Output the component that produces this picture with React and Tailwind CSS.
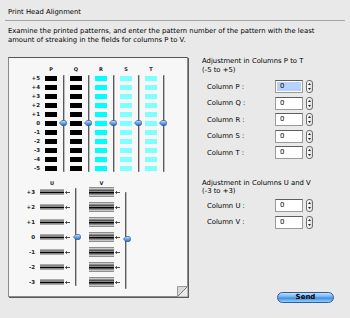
import React from "react";

const topRows = ["+5", "+4", "+3", "+2", "+1", "0", "-1", "-2", "-3", "-4", "-5"];
const topCols = [
  { name: "P", color: "bg-black" },
  { name: "Q", color: "bg-black" },
  { name: "R", color: "bg-[#00ffff]" },
  { name: "S", color: "bg-[#80ffff]" },
  { name: "T", color: "bg-[#80ffff]" },
];
const bottomRows = ["+3", "+2", "+1", "0", "-1", "-2", "-3"];

const Thumb = () => (
  <svg width="8" height="6" viewBox="0 0 8 6">
    <defs>
      <linearGradient id="thumbFill" x1="0" y1="0" x2="0" y2="1">
        <stop offset="0" stopColor="#d6eaff" />
        <stop offset="0.5" stopColor="#6aa6ea" />
        <stop offset="1" stopColor="#2f6fc4" />
      </linearGradient>
    </defs>
    <path d="M0.5 3 L2.8 0.5 H6 Q7.5 0.5 7.5 3 Q7.5 5.5 6 5.5 H2.8 Z" fill="url(#thumbFill)" stroke="#2a5a9a" strokeWidth="0.7" />
  </svg>
);

const Track = ({ top, height, thumbTop }) => (
  <div className="relative h-full">
    <div
      className="absolute left-1/2 -translate-x-1/2 w-[2px] bg-[#5a5a5a] border-r border-[#bdbdbd] rounded-full"
      style={{ top, height }}
    />
    <div className="absolute left-[2px]" style={{ top: thumbTop }}>
      <Thumb />
    </div>
  </div>
);

const Arrow = () => (
  <svg width="5" height="5" viewBox="0 0 5 5" className="ml-[1px]">
    <path d="M0.5 2.5 H5" stroke="#222" strokeWidth="0.8" />
    <path d="M0.5 2.5 L2 1.2 M0.5 2.5 L2 3.8" stroke="#222" strokeWidth="0.8" />
  </svg>
);

const TopChart = () => (
  <div className="flex text-[5.5px] font-bold leading-[9px] text-[#222]">
    <div className="flex flex-col w-[26px] pr-[2px] text-right">
      <div className="h-[9px]" />
      {topRows.map((r) => (
        <div key={r} className="h-[9px]">{r}</div>
      ))}
    </div>
    <div className="w-[3px]" />
    {topCols.map((c) => (
      <div key={c.name} className="flex">
        <div className="flex flex-col w-[12px]">
          <div className="h-[9px] text-center text-[5px]">{c.name}</div>
          {topRows.map((r) => (
            <div key={r} className="h-[9px] flex items-center">
              <div className={`w-[12px] h-[5px] ${c.color}`} />
            </div>
          ))}
        </div>
        <div className="flex flex-col w-[13px]">
          <div className="h-[9px]" />
          <div className="h-[99px]">
            <Track top={1.5} height={97} thumbTop={46.5} />
          </div>
        </div>
      </div>
    ))}
  </div>
);

const UBar = () => (
  <div className="w-[24px] h-[6px] bg-[#8a8a8a] border-y border-[#aaa] flex flex-col justify-center">
    <div className="h-px bg-black" />
  </div>
);

const VBar = () => (
  <div className="w-[25px] h-[10px] bg-[#8d8d8d] flex flex-col justify-between py-[1px]">
    <div className="h-px bg-[#c8c8c8]" />
    <div className="h-px bg-[#555]" />
    <div className="h-px bg-black" />
    <div className="h-px bg-[#555]" />
    <div className="h-px bg-[#c8c8c8]" />
  </div>
);

const BottomChart = () => (
  <div className="flex text-[5.5px] font-bold text-[#222]">
    <div className="flex flex-col w-[21px] pr-[2px] text-right">
      <div className="h-[6px]" />
      {bottomRows.map((r) => (
        <div key={r} className="h-[15px] leading-[15px]">{r}</div>
      ))}
    </div>
    <div className="w-[3px]" />
    <div className="flex flex-col w-[31px]">
      <div className="h-[6px] leading-[6px] w-[24px] text-center text-[5px] relative top-[1.5px]">U</div>
      {bottomRows.map((r) => (
        <div key={r} className="h-[15px] flex items-center">
          <UBar />
          <Arrow />
        </div>
      ))}
    </div>
    <div className="flex flex-col w-[10px]">
      <div className="h-[6px]" />
      <div className="h-[105px]">
        <Track top={3.5} height={98} thumbTop={49.5} />
      </div>
    </div>
    <div className="w-[8px]" />
    <div className="flex flex-col w-[32px]">
      <div className="h-[6px] leading-[6px] w-[25px] text-center text-[5px] relative top-[1.5px]">V</div>
      {bottomRows.map((r) => (
        <div key={r} className="h-[15px] flex items-center">
          <VBar />
          <Arrow />
        </div>
      ))}
    </div>
    <div className="flex flex-col w-[10px]">
      <div className="h-[6px]" />
      <div className="h-[105px]">
        <Track top={7.5} height={97} thumbTop={51.5} />
      </div>
    </div>
  </div>
);

const Paper = () => (
  <div className="relative w-[180px] h-[240px] bg-[#f7f7f7] border border-[#8a8a8a] border-t-[#555] shadow-[1px_1px_0_#5c5c5c] pl-[7px] pt-[6.5px] flex flex-col shrink-0">
    <TopChart />
    <div className="h-[6px]" />
    <BottomChart />
    <svg width="11" height="11" viewBox="0 0 11 11" className="absolute right-[-1px] bottom-[-1px]">
      <path d="M0.5 10.5 L0.5 0.5 L10.5 0.5 Z" fill="#d9d9d9" />
      <path d="M0.5 10.5 L10.5 0.5 L10.5 10.5 Z" fill="#e9e9e9" />
      <path d="M0.5 0.5 L10.5 0.5 M0.5 0.5 L0.5 10.5" stroke="#9a9a9a" strokeWidth="1" />
      <path d="M0.5 10.5 L10.5 0.5" stroke="#7a7a7a" strokeWidth="1" />
    </svg>
  </div>
);

const Stepper = () => (
  <svg width="7" height="13" viewBox="0 0 7 13" className="ml-[3px]">
    <defs>
      <linearGradient id="stepFill" x1="0" y1="0" x2="1" y2="0">
        <stop offset="0" stopColor="#ffffff" />
        <stop offset="1" stopColor="#dcdcdc" />
      </linearGradient>
    </defs>
    <rect x="0.5" y="0.5" width="6" height="12" rx="2.5" fill="url(#stepFill)" stroke="#6e6e6e" />
    <path d="M3.5 3 L5 5 H2 Z" fill="#222" />
    <path d="M3.5 10 L5 8 H2 Z" fill="#222" />
  </svg>
);

const Field = ({ label, selected }) => (
  <div className="flex items-center h-[16.5px]">
    <div className="w-[73px] pl-[5px]">{label}</div>
    <div className="w-[28px] h-[13px] bg-white border border-[#9a9a9a] border-t-[#5f5f5f] p-[1px]">
      <div className={`h-full pl-[3px] leading-[9px] ${selected ? "bg-[#b5d3fa]" : ""}`}>0</div>
    </div>
    <Stepper />
  </div>
);

const Form = () => (
  <div className="flex flex-col flex-1 pl-[14px] h-[246px]">
    <div className="leading-[9px] -mt-[0.5px]">
      <div>Adjustment in Columns P to T</div>
      <div>(-5 to +5)</div>
    </div>
    <div className="mt-[4px] flex flex-col">
      <Field label="Column P :" selected />
      <Field label="Column Q :" />
      <Field label="Column R :" />
      <Field label="Column S :" />
      <Field label="Column T :" />
    </div>
    <div className="leading-[8.5px] mt-[17.5px]">
      <div>Adjustment in Columns U and V</div>
      <div>(-3 to +3)</div>
    </div>
    <div className="mt-[2px] flex flex-col">
      <Field label="Column U :" />
      <Field label="Column V :" />
    </div>
    <div className="mt-auto flex justify-end pr-[16px]">
      <button className="w-[57px] h-[11px] rounded-full border border-[#2c5d9c] bg-[linear-gradient(#c4e0fb,#6aaeee_45%,#3f8de0_55%,#8fd0ff)] text-[7px] font-bold leading-[9px] text-black">
        Send
      </button>
    </div>
  </div>
);

export default function App() {
  return (
    <div className="w-[350px] h-[318px] overflow-hidden bg-[#e9e9e9] text-black text-[6.85px] font-['DejaVu_Sans',sans-serif]">
      <div className="pl-[8px] pt-[8px] leading-[9px]">Print Head Alignment</div>
      <div className="mx-[5px] mt-[3px] h-px bg-[#a3a3a3]" />
      <p className="pl-[8px] mt-[6px] leading-[9px]">
        Examine the printed patterns, and enter the pattern number of the pattern with the least
        <br />
        amount of streaking in the fields for columns P to V.
      </p>
      <div className="flex pl-[8px] mt-[12px]">
        <Paper />
        <Form />
      </div>
    </div>
  );
}
